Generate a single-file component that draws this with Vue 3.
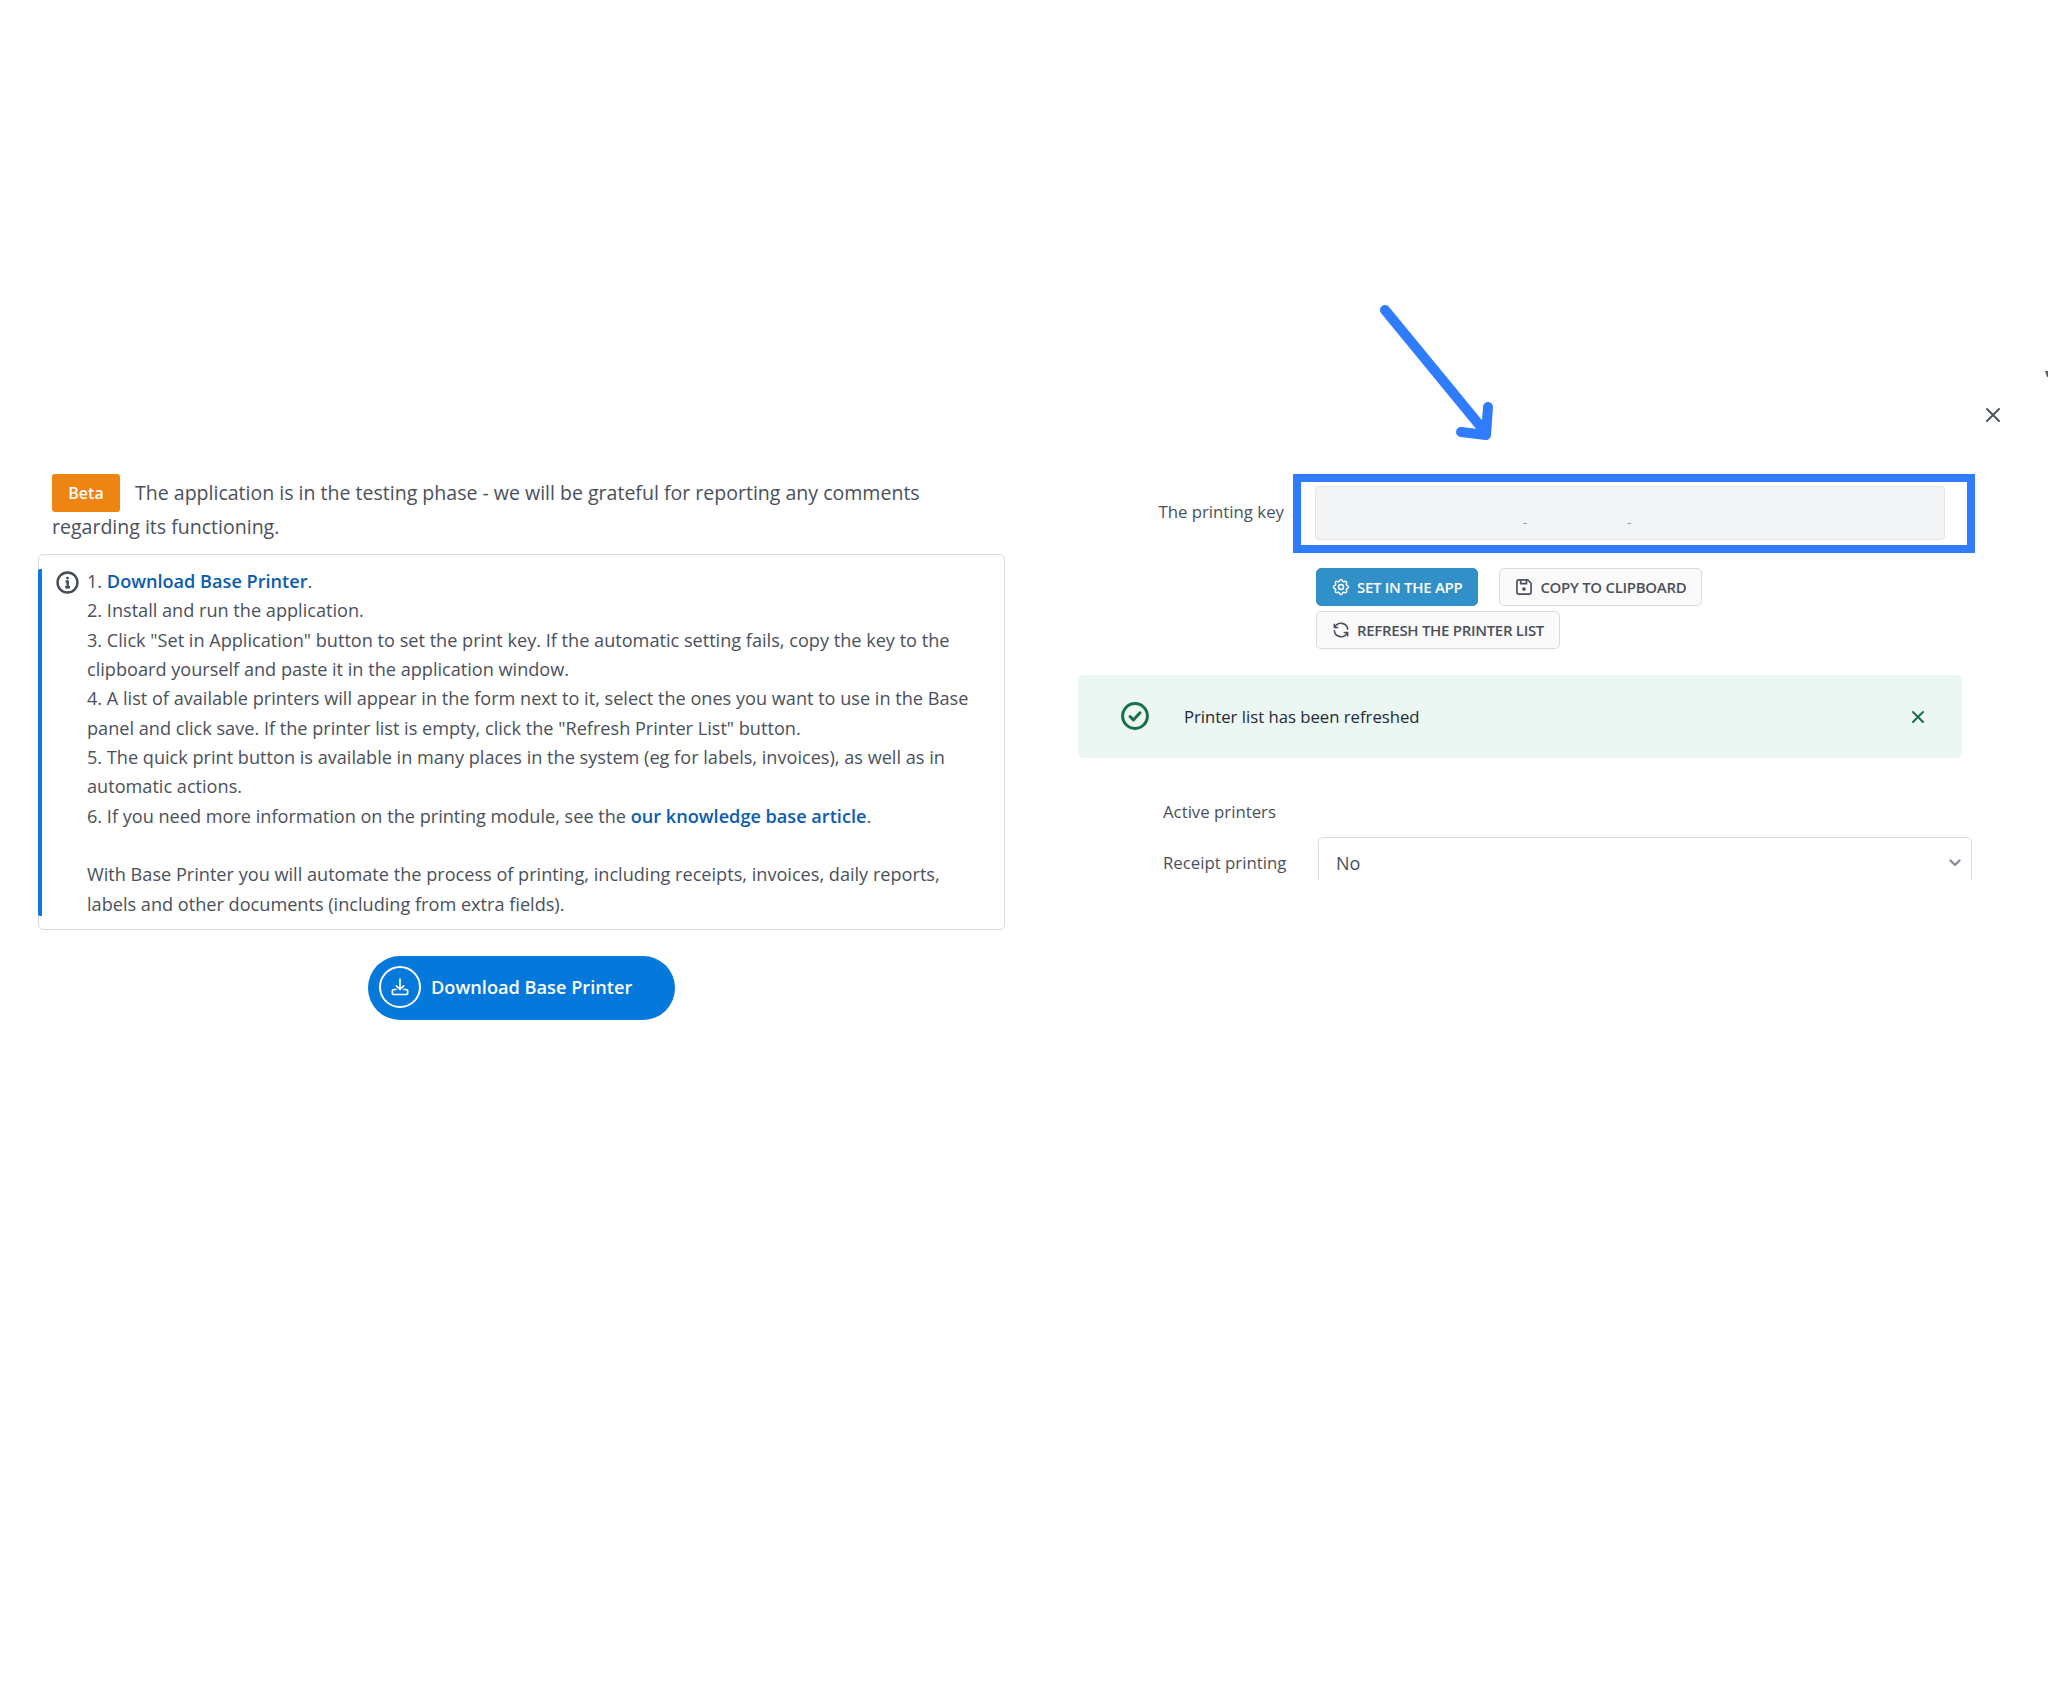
<script setup>
const steps = [
  { text: '2. Install and run the application.' },
  { text: '3. Click "Set in Application" button to set the print key. If the automatic setting fails, copy the key to the clipboard yourself and paste it in the application window.' },
  { text: '4. A list of available printers will appear in the form next to it, select the ones you want to use in the Base panel and click save. If the printer list is empty, click the "Refresh Printer List" button.' },
  { text: '5. The quick print button is available in many places in the system (eg for labels, invoices), as well as in automatic actions.' },
];
</script>

<template>
  <div class="page">
    <div class="left">
      <p class="intro">
        <span class="beta">Beta</span>The application is in the testing phase - we will be grateful for reporting any comments regarding its functioning.
      </p>

      <div class="card">
        <span class="card-bar"></span>
        <svg class="info-icon" viewBox="0 0 24 24" fill="none" stroke="#464d58" stroke-width="2.5">
          <circle cx="12" cy="12" r="10.4" />
          <path d="M10 11h2.2v6M9.6 17h5" />
          <circle cx="12" cy="7.4" r="1.5" fill="#464d58" stroke="none" />
        </svg>
        <div class="card-text">
          <div>1. <a class="link">Download Base Printer</a>.</div>
          <div v-for="step in steps" :key="step.text">{{ step.text }}</div>
          <div>6. If you need more information on the printing module, see the <a class="link">our knowledge base article</a>.</div>
          <div class="closing">With Base Printer you will automate the process of printing, including receipts, invoices, daily reports, labels and other documents (including from extra fields).</div>
        </div>
      </div>

      <div class="download-wrap">
        <button class="download">
          <span class="download-ring">
            <svg viewBox="0 0 24 24" fill="none" stroke="#fff" stroke-width="1.7" stroke-linecap="round" stroke-linejoin="round">
              <path d="M12 4v10.5M8.3 10.8l3.7 3.7 3.7-3.7" />
              <path d="M8 14.5H5.6a1.2 1.2 0 0 0-1.2 1.2v2.6a1.2 1.2 0 0 0 1.2 1.2h12.8a1.2 1.2 0 0 0 1.2-1.2v-2.6a1.2 1.2 0 0 0-1.2-1.2H16" />
            </svg>
          </span>
          Download Base Printer
        </button>
      </div>
    </div>

    <div class="right">
      <div class="key-row">
        <label class="key-label">The printing key</label>
        <div class="highlight">
          <div class="key-input">
            <span class="dash">-</span>
            <span class="dash">-</span>
          </div>
        </div>
      </div>

      <div class="actions">
        <button class="btn btn-primary">
          <svg class="btn-icon" viewBox="0 0 24 24" fill="none" stroke="#fff" stroke-width="1.8">
            <path d="M10.325 4.317c.426-1.756 2.924-1.756 3.35 0a1.724 1.724 0 0 0 2.573 1.066c1.543-.94 3.31.826 2.37 2.37a1.724 1.724 0 0 0 1.065 2.572c1.756.426 1.756 2.924 0 3.35a1.724 1.724 0 0 0-1.066 2.573c.94 1.543-.826 3.31-2.37 2.37a1.724 1.724 0 0 0-2.572 1.065c-.426 1.756-2.924 1.756-3.35 0a1.724 1.724 0 0 0-2.573-1.066c-1.543.94-3.31-.826-2.37-2.37a1.724 1.724 0 0 0-1.065-2.572c-1.756-.426-1.756-2.924 0-3.35a1.724 1.724 0 0 0 1.066-2.573c-.94-1.543.826-3.31 2.37-2.37 1 .608 2.296.07 2.572-1.065z" />
            <circle cx="12" cy="12" r="3" />
          </svg>
          SET IN THE APP
        </button>
        <button class="btn">
          <svg class="btn-icon" viewBox="0 0 24 24" fill="none" stroke="#4a505c" stroke-width="2" stroke-linejoin="round">
            <path d="M6 3.5h10.5l4 4V18a2.5 2.5 0 0 1-2.5 2.5H6A2.5 2.5 0 0 1 3.5 18V6A2.5 2.5 0 0 1 6 3.5z" />
            <path d="M8 3.5V8h7V3.5" />
            <circle cx="12" cy="14.5" r="2.2" fill="#4a505c" stroke="none" />
          </svg>
          COPY TO CLIPBOARD
        </button>
        <button class="btn">
          <svg class="btn-icon" viewBox="0 0 24 24" fill="none" stroke="#4a505c" stroke-width="1.9" stroke-linecap="round" stroke-linejoin="round">
            <path d="M20 11A8.1 8.1 0 0 0 4.5 9M4 5v4h4" />
            <path d="M4 13a8.1 8.1 0 0 0 15.5 2m.5 4v-4h-4" />
          </svg>
          REFRESH THE PRINTER LIST
        </button>
      </div>

      <div class="alert">
        <svg class="alert-icon" viewBox="0 0 28 28" fill="none" stroke="#17704a" stroke-width="3" stroke-linecap="round" stroke-linejoin="round">
          <circle cx="14" cy="14" r="12.4" />
          <path d="M9 14.5l3.4 3.4L19 10.8" />
        </svg>
        <span class="alert-text">Printer list has been refreshed</span>
        <svg class="alert-close" viewBox="0 0 14 14" fill="none" stroke="#17704a" stroke-width="2" stroke-linecap="round">
          <path d="M2 2l10 10M12 2L2 12" />
        </svg>
      </div>

      <div class="printers">
        <div class="printers-title">Active printers</div>
        <div class="select-row">
          <label class="select-label">Receipt printing</label>
          <div class="select">
            <span>No</span>
            <svg class="chevron" viewBox="0 0 12 8" fill="none" stroke="#8a909c" stroke-width="2.4" stroke-linecap="round" stroke-linejoin="round">
              <path d="M1.5 1.5L6 6l4.5-4.5" />
            </svg>
          </div>
        </div>
      </div>
    </div>

    <!-- annotation and overlay bits -->
    <svg class="arrow" width="120" height="140" viewBox="0 0 120 140" fill="none" stroke="#2f7cff" stroke-width="10" stroke-linecap="round" stroke-linejoin="round">
      <path d="M6 6L107 129" />
      <path d="M109 103L107 131L82 128" />
    </svg>
    <svg class="close" width="16" height="16" viewBox="0 0 16 16" fill="none" stroke="#4e5561" stroke-width="2" stroke-linecap="round">
      <path d="M2 2l12 12M14 2L2 14" />
    </svg>
    <svg class="edge-mark" width="3" height="6" viewBox="0 0 3 6" fill="#5a606b">
      <path d="M0 0h3v6H2z" />
    </svg>
  </div>
</template>

<style scoped>
.page {
  position: relative;
  width: 2048px;
  height: 1707px;
  overflow: hidden;
  background: #fff;
  display: flex;
  align-items: flex-start;
  padding-top: 474px;
  box-sizing: border-box;
  font-family: "Open Sans", sans-serif;
  color: #4a505c;
}

.left {
  width: 967px;
  margin-left: 38px;
  padding-top: 2px;
  flex-shrink: 0;
}

.intro {
  margin: 0;
  padding-left: 14px;
  font-size: 19.55px;
  line-height: 34px;
}

.beta {
  float: left;
  width: 68px;
  height: 38px;
  margin: -2px 15px -4px 0;
  background: #ee8513;
  border-radius: 3px;
  color: #fff;
  font-size: 16px;
  font-weight: 600;
  line-height: 38px;
  text-align: center;
}

.card {
  position: relative;
  margin-top: 10px;
  height: 376px;
  box-sizing: border-box;
  border: 1.5px solid #d6dae5;
  border-radius: 5px;
  padding: 12px 20px 0 48px;
  background: #fff;
}

.card-bar {
  position: absolute;
  left: -1.5px;
  top: 13.5px;
  bottom: 13.5px;
  width: 4px;
  background: #0a78dd;
  border-radius: 2px 0 0 2px;
}

.info-icon {
  position: absolute;
  left: 17px;
  top: 16px;
  width: 23px;
  height: 23px;
}

.card-text {
  font-size: 18.14px;
  line-height: 29.33px;
}

.link {
  color: #0b5cad;
  font-weight: 600;
}

.closing {
  margin-top: 29.33px;
}

.download-wrap {
  display: flex;
  justify-content: center;
  margin-top: 26px;
}

.download {
  display: flex;
  align-items: center;
  gap: 10px;
  width: 307px;
  height: 64px;
  padding: 0 0 2px 11px;
  border: none;
  border-radius: 32px;
  background: #0578dc;
  color: #fff;
  font-family: inherit;
  font-size: 18.2px;
  font-weight: 600;
}

.download-ring {
  display: flex;
  align-items: center;
  justify-content: center;
  width: 42px;
  height: 42px;
  box-sizing: border-box;
  border: 2.5px solid #fff;
  border-radius: 50%;
}

.download-ring svg {
  width: 24px;
  height: 24px;
}

.right {
  width: 897px;
  margin-left: 73px;
  flex-shrink: 0;
}

.key-row {
  display: flex;
  align-items: center;
  gap: 9px;
}

.key-label {
  width: 206px;
  padding-bottom: 4px;
  text-align: right;
  font-size: 16.8px;
}

.highlight {
  width: 682px;
  height: 79px;
  box-sizing: border-box;
  border: 8px solid #2f7cff;
  padding: 4px 22px 5px 14px;
}

.key-input {
  display: flex;
  gap: 100px;
  align-items: flex-end;
  height: 54px;
  box-sizing: border-box;
  padding: 0 0 9px 207px;
  background: #f3f4f6;
  border: 1.5px solid #e3e5ea;
  border-radius: 4px;
}

.dash {
  color: #8a8f98;
  font-size: 13px;
  line-height: 16px;
}

.actions {
  display: flex;
  flex-wrap: wrap;
  gap: 5px 21px;
  width: 420px;
  margin: 15px 0 0 238px;
}

.btn {
  display: flex;
  align-items: center;
  gap: 6px;
  height: 38px;
  padding: 0 15px 0 14px;
  border: 1.5px solid #d6dae5;
  border-radius: 5px;
  background: #fafafb;
  color: #4a505c;
  font-family: inherit;
  font-size: 15px;
  font-weight: 600;
  letter-spacing: -0.3px;
}

.btn-primary {
  background: #3290c9;
  border-color: #3290c9;
  color: #fff;
}

.btn-icon {
  width: 20px;
  height: 20px;
}

.alert {
  display: flex;
  align-items: center;
  height: 83px;
  width: 884px;
  margin-top: 26px;
  box-sizing: border-box;
  padding: 0 37px 0 43px;
  background: #ecf6f2;
  border-radius: 6px;
}

.alert-icon {
  width: 28px;
  height: 28px;
  margin-bottom: 2px;
  flex-shrink: 0;
}

.alert-text {
  margin-left: 35px;
  flex: 1;
  font-size: 16.7px;
  color: #212a33;
}

.alert-close {
  width: 14px;
  height: 14px;
}

.printers {
  margin: 42px 0 0 85px;
  font-size: 16.8px;
}

.printers-title {
  height: 24px;
  line-height: 24px;
}

.select-row {
  display: flex;
  height: 43px;
  margin-top: 13px;
  overflow: hidden;
}

.select-label {
  width: 155px;
  line-height: 52px;
}

.select {
  display: flex;
  align-items: center;
  justify-content: space-between;
  width: 654px;
  height: 52px;
  box-sizing: border-box;
  padding: 0 10px 0 17px;
  border: 1.5px solid #d6dae5;
  border-radius: 5px;
  font-size: 18px;
}

.chevron {
  width: 12px;
  height: 8px;
}

.arrow {
  position: absolute;
  left: 1379px;
  top: 304px;
}

.close {
  position: absolute;
  left: 1985px;
  top: 407px;
}

.edge-mark {
  position: absolute;
  left: 2045px;
  top: 371px;
}
</style>
